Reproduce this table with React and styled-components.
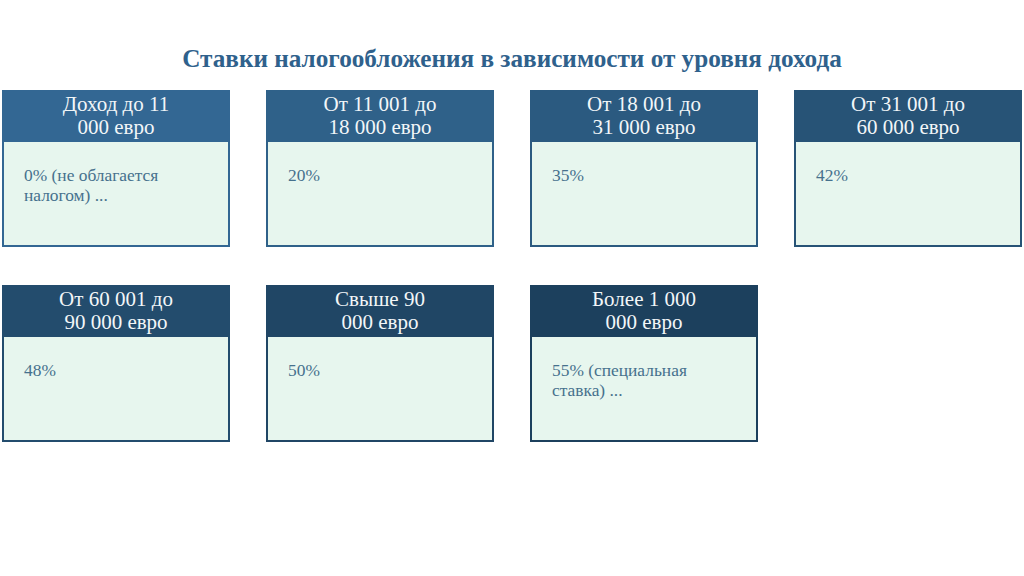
import React from "react";
import styled, { createGlobalStyle } from "styled-components";

const Global = createGlobalStyle`
  html, body { margin: 0; padding: 0; background: #ffffff; }
  body { width: 1024px; height: 576px; overflow: hidden; }
`;

const Page = styled.div`
  width: 1024px;
  height: 576px;
  box-sizing: border-box;
  padding: 44px 2px 0 2px;
  background: #ffffff;
`;

const Title = styled.h1`
  margin: 0 0 16px 0;
  text-align: center;
  font-family: "Liberation Serif", "Times New Roman", serif;
  font-weight: bold;
  font-size: 25.2px;
  line-height: 30px;
  color: #2f618c;
`;

const Grid = styled.div`
  display: grid;
  grid-template-columns: repeat(4, 228px);
  column-gap: 36px;
  row-gap: 38px;
`;

const Card = styled.div`
  height: 157px;
  box-sizing: border-box;
  border: 2px solid ${(p) => p.$tone};
  background: #e7f6ee;
  display: flex;
  flex-direction: column;
`;

const Header = styled.div`
  height: 50px;
  background: ${(p) => p.$tone};
  color: #f2f6f8;
  font-family: "Liberation Serif", "Times New Roman", serif;
  font-size: 21px;
  line-height: 23px;
  text-align: center;
  display: flex;
  align-items: center;
  justify-content: center;
  padding: 0 6px 2px 6px;
  box-sizing: border-box;
`;

const Body = styled.div`
  padding: 23px 20px 0 20px;
  font-family: "Liberation Serif", "Times New Roman", serif;
  font-size: 17.4px;
  line-height: 20px;
  color: #46718d;
`;

const items = [
  { h: ["Доход до 11", "000 евро"], b: ["0% (не облагается", "налогом) ..."], tone: "#336793" },
  { h: ["От 11 001 до", "18 000 евро"], b: ["20%"], tone: "#2f6189" },
  { h: ["От 18 001 до", "31 000 евро"], b: ["35%"], tone: "#2b5a80" },
  { h: ["От 31 001 до", "60 000 евро"], b: ["42%"], tone: "#275376" },
  { h: ["От 60 001 до", "90 000 евро"], b: ["48%"], tone: "#234c6d" },
  { h: ["Свыше 90", "000 евро"], b: ["50%"], tone: "#204665" },
  { h: ["Более 1 000", "000 евро"], b: ["55% (специальная", "ставка) ..."], tone: "#1c405d" },
];

export default function App() {
  return (
    <>
      <Global />
      <Page>
        <Title>Ставки налогообложения в зависимости от уровня дохода</Title>
        <Grid>
          {items.map((it, i) => (
            <Card key={i} $tone={it.tone}>
              <Header $tone={it.tone}>
                <div>
                  {it.h[0]}
                  <br />
                  {it.h[1]}
                </div>
              </Header>
              <Body>
                {it.b.map((l, j) => (
                  <div key={j}>{l}</div>
                ))}
              </Body>
            </Card>
          ))}
        </Grid>
      </Page>
    </>
  );
}
